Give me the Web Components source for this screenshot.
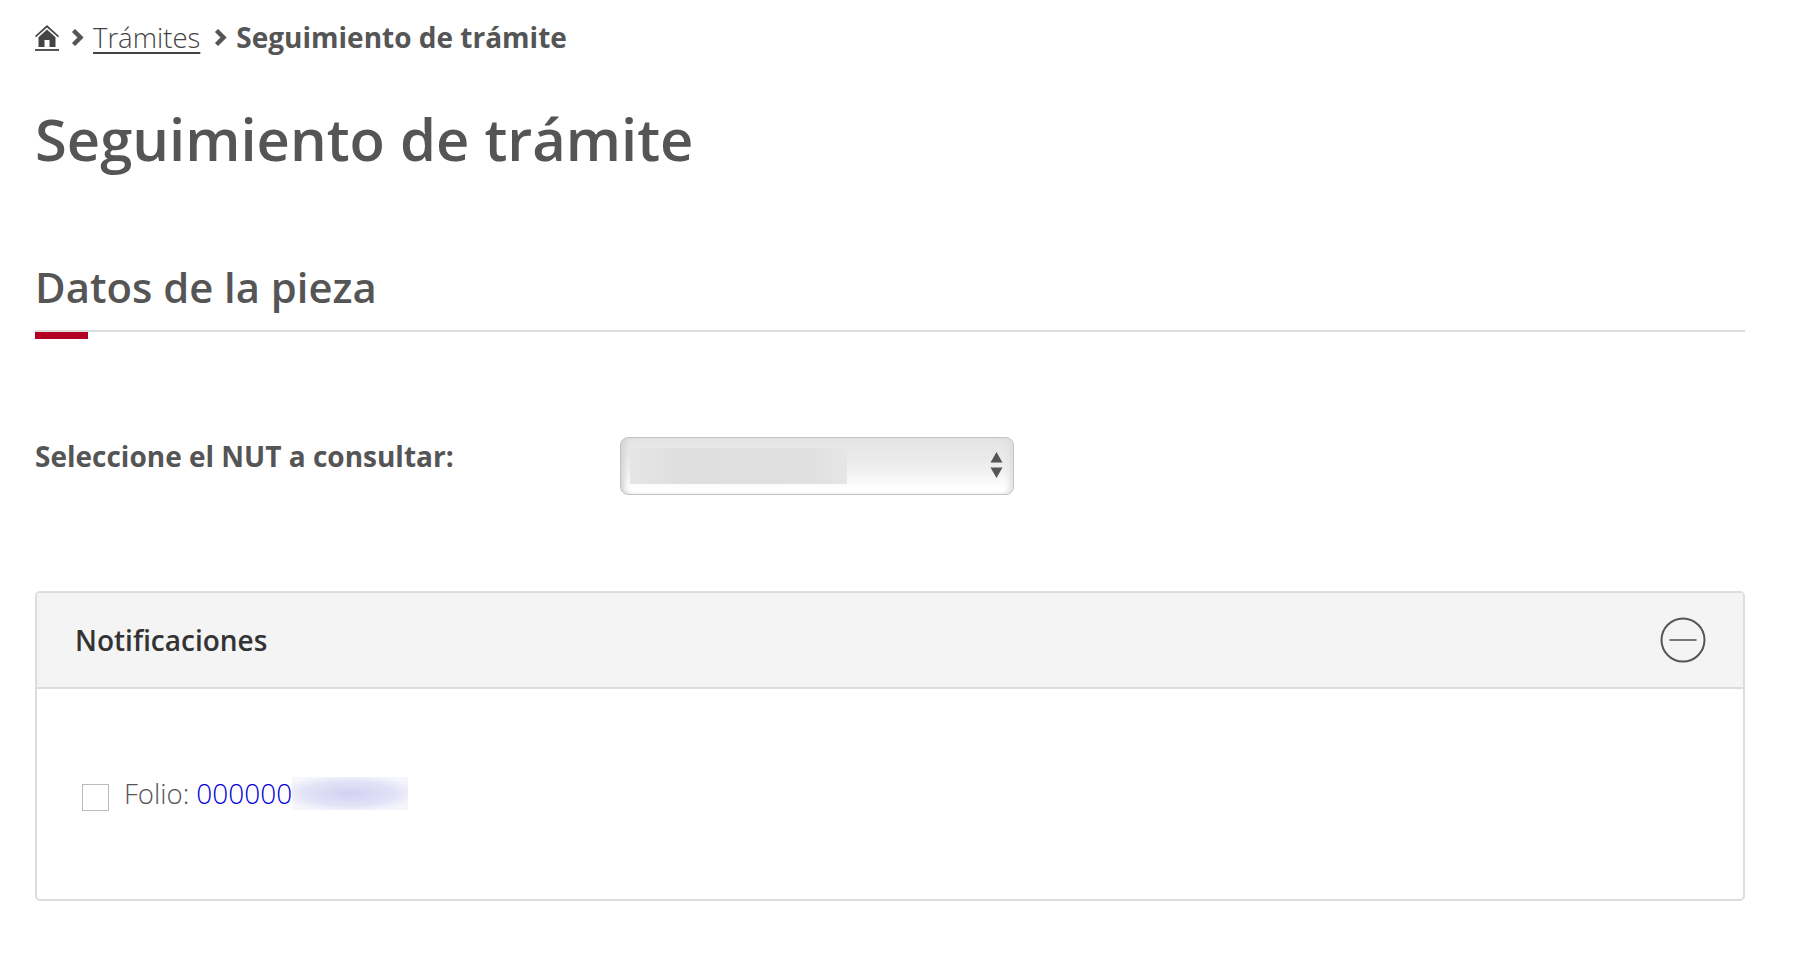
<!DOCTYPE html>
<html lang="es">
<head>
<meta charset="utf-8">
<title>Seguimiento de trámite</title>
<style>
    html, body { margin: 0; background: #fff; }
    body { font-family: "Open Sans", "Liberation Sans", sans-serif; color: #555; padding: 0 59px 0 35px; }
</style>
</head>
<body>
<app-breadcrumb></app-breadcrumb>
<page-title>Seguimiento de trámite</page-title>
<section-heading>Datos de la pieza</section-heading>
<nut-field label="Seleccione el NUT a consultar:"></nut-field>
<collapse-panel title-text="Notificaciones">
    <folio-item prefix="000000"></folio-item>
</collapse-panel>

<script>
const chevron = `<svg class="chev" width="13" height="17" viewBox="0 0 13 17"><path d="M2.500 1.500 9.500 8.500 2.500 15.500" fill="none" stroke="#555" stroke-width="4.400"/></svg>`;

class AppBreadcrumb extends HTMLElement {
    connectedCallback() {
        this.attachShadow({mode: "open"}).innerHTML = `
            <style>
                :host { display: flex; align-items: center; height: 38px; padding-top: 18px; padding-bottom: 1px; font-size: 28px; color: #555; }
                a { color: inherit; font-weight: 300; font-size: 27.500px; text-decoration: underline; text-decoration-thickness: 1.500px; text-underline-offset: 4px; color: #444; }
                .home { display: block; height: 24px; margin-top: 2px; border-bottom: 2px solid #555; }
                .home svg { display: block; }
                .chev { flex: none; }
                b { font-weight: 700; }
            </style>
            <a class="home" href="#"><svg width="24" height="22" viewBox="0 0 24 22"><path d="M12 0 0 11l1 1.200L12 2.400l11 9.800 1-1.200z" fill="#444"/><path d="M12 4.600 3.500 12.200V22h6v-7h5v7h6v-9.800z" fill="#444"/></svg></a>
            <span style="display:flex;margin:0 9px 0 12px">${chevron}</span>
            <a href="#">Trámites</a>
            <span style="display:flex;margin:0 9px 0 14px">${chevron}</span>
            <b>Seguimiento de trámite</b>`;
    }
}

class PageTitle extends HTMLElement {
    connectedCallback() {
        this.attachShadow({mode: "open"}).innerHTML = `
            <style>
                :host { display: block; margin-top: 46px; font-size: 57.900px; line-height: 72px; font-weight: 600; color: #555; }
            </style>
            <slot></slot>`;
    }
}

class SectionHeading extends HTMLElement {
    connectedCallback() {
        this.attachShadow({mode: "open"}).innerHTML = `
            <style>
                :host { display: block; margin-top: 84px; font-size: 41.800px; line-height: 56px; font-weight: 600; color: #555; }
                .text { padding-bottom: 15px; border-bottom: 2px solid #ddd; }
                .bar { width: 53px; height: 7px; background: #b30024; }
            </style>
            <div class="text"><slot></slot></div>
            <div class="bar"></div>`;
    }
}

class NutField extends HTMLElement {
    connectedCallback() {
        this.attachShadow({mode: "open"}).innerHTML = `
            <style>
                :host { display: flex; align-items: flex-start; margin-top: 98px; }
                label { width: 585px; font-size: 28px; line-height: 38px; font-weight: 700; color: #555; }
            </style>
            <label>${this.getAttribute("label")}</label>
            <fake-select></fake-select>`;
    }
}

class FakeSelect extends HTMLElement {
    connectedCallback() {
        this.attachShadow({mode: "open"}).innerHTML = `
            <style>
                :host { display: block; position: relative; box-sizing: border-box; width: 394px; height: 58px; border: 1.500px solid #c4c4c4; border-radius: 8px;
                    background: linear-gradient(#e4e4e4 0%, #ebebeb 40%, #f3f3f3 65%, #fff 90%);
                    box-shadow: inset 6px 0 6px -3px #d0d0d0, inset -6px 0 6px -3px #dcdcdc; }
                .blur { position: absolute; left: 9px; top: 10px; width: 217px; height: 36px; background: linear-gradient(90deg, #e6e6e6, #dfdfdf 20%, #e0e0e0 85%, #e6e6e6); }
                svg { position: absolute; right: 10px; top: 14px; }
            </style>
            <div class="blur"></div>
            <svg width="13" height="27" viewBox="0 0 13 27"><path d="M6.500 0 12.500 10.500.5 10.500zM6.500 26 .5 15.500h12z" fill="#555"/></svg>`;
    }
}

class CollapsePanel extends HTMLElement {
    connectedCallback() {
        this.attachShadow({mode: "open"}).innerHTML = `
            <style>
                :host { display: block; box-sizing: border-box; margin-top: 96px; height: 310px; border: 2px solid #ddd; border-radius: 5px; }
                header { display: flex; align-items: center; justify-content: space-between; box-sizing: border-box; height: 96px; padding: 0 37px 0 38px; background: #f4f4f4; border-bottom: 2px solid #ddd; }
                h3 { margin: 0; font-size: 28px; font-weight: 600; color: #333; }
                svg { display: block; }
                .body { padding: 87px 40px 0 45px; }
            </style>
            <header>
                <h3>${this.getAttribute("title-text")}</h3>
                <svg width="46" height="46" viewBox="0 0 46 46"><circle cx="23" cy="23" r="21.500" fill="none" stroke="#555" stroke-width="2"/><path d="M9.500 23h27" stroke="#777" stroke-width="2"/></svg>
            </header>
            <div class="body"><slot></slot></div>`;
    }
}

class FolioItem extends HTMLElement {
    connectedCallback() {
        this.attachShadow({mode: "open"}).innerHTML = `
            <style>
                :host { display: flex; align-items: flex-start; font-size: 27.600px; line-height: 34px; font-weight: 300; color: #555; }
                .box { box-sizing: border-box; flex: none; width: 27px; height: 27px; margin-top: 8px; margin-right: 15px; border: 1.500px solid #bbb; background: #fff; }
                .folio { color: #0000d8; margin-left: 7px; font-size: 28px; }
                .blur { width: 116px; height: 33px; margin-top: 1px; background: radial-gradient(ellipse 60% 55% at 50% 50%, #d2d2f2, #e2e2f7 65%, #f5f5fc); }
            </style>
            <span class="box"></span>
            <span>Folio:</span>
            <a class="folio">${this.getAttribute("prefix")}</a>
            <span class="blur"></span>`;
    }
}

customElements.define('app-breadcrumb', AppBreadcrumb);
customElements.define('page-title', PageTitle);
customElements.define('section-heading', SectionHeading);
customElements.define('nut-field', NutField);
customElements.define('fake-select', FakeSelect);
customElements.define('collapse-panel', CollapsePanel);
customElements.define('folio-item', FolioItem);
</script>
</body>
</html>
